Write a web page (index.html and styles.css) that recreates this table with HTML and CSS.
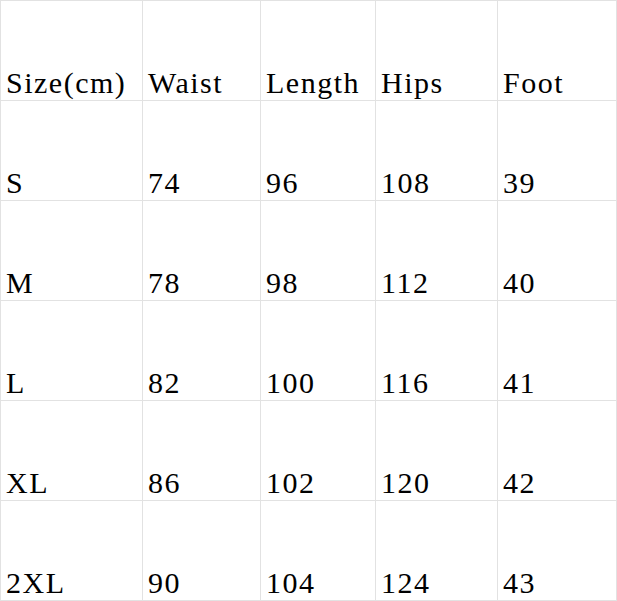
FILE: index.html
```html
<!DOCTYPE html>
<html>
<head>
<meta charset="utf-8">
<link rel="stylesheet" href="styles.css">
</head>
<body>
<div class="sheet">
  <div class="cell">Size(cm)</div><div class="cell">Waist</div><div class="cell">Length</div><div class="cell">Hips</div><div class="cell">Foot</div>
  <div class="cell">S</div><div class="cell">74</div><div class="cell">96</div><div class="cell">108</div><div class="cell">39</div>
  <div class="cell">M</div><div class="cell">78</div><div class="cell">98</div><div class="cell">112</div><div class="cell">40</div>
  <div class="cell">L</div><div class="cell">82</div><div class="cell">100</div><div class="cell">116</div><div class="cell">41</div>
  <div class="cell">XL</div><div class="cell">86</div><div class="cell">102</div><div class="cell">120</div><div class="cell">42</div>
  <div class="cell">2XL</div><div class="cell">90</div><div class="cell">104</div><div class="cell">124</div><div class="cell">43</div>
</div>
</body>
</html>
```
FILE: styles.css
```css
html, body {
  margin: 0;
  padding: 0;
  background: #ffffff;
}
.sheet {
  display: grid;
  grid-template-columns: 141px 117px 114px 121px 118px;
  grid-auto-rows: 99px;
  gap: 1px;
  padding: 1px;
  width: 617px;
  box-sizing: border-box;
  background: #e2e2e2;
}
.cell {
  background: #ffffff;
  display: flex;
  align-items: flex-end;
  padding: 0 0 2px 5px;
  font-family: "Liberation Serif", serif;
  font-size: 30px;
  line-height: 30px;
  letter-spacing: 1.5px;
  color: #000000;
  white-space: nowrap;
}
```
